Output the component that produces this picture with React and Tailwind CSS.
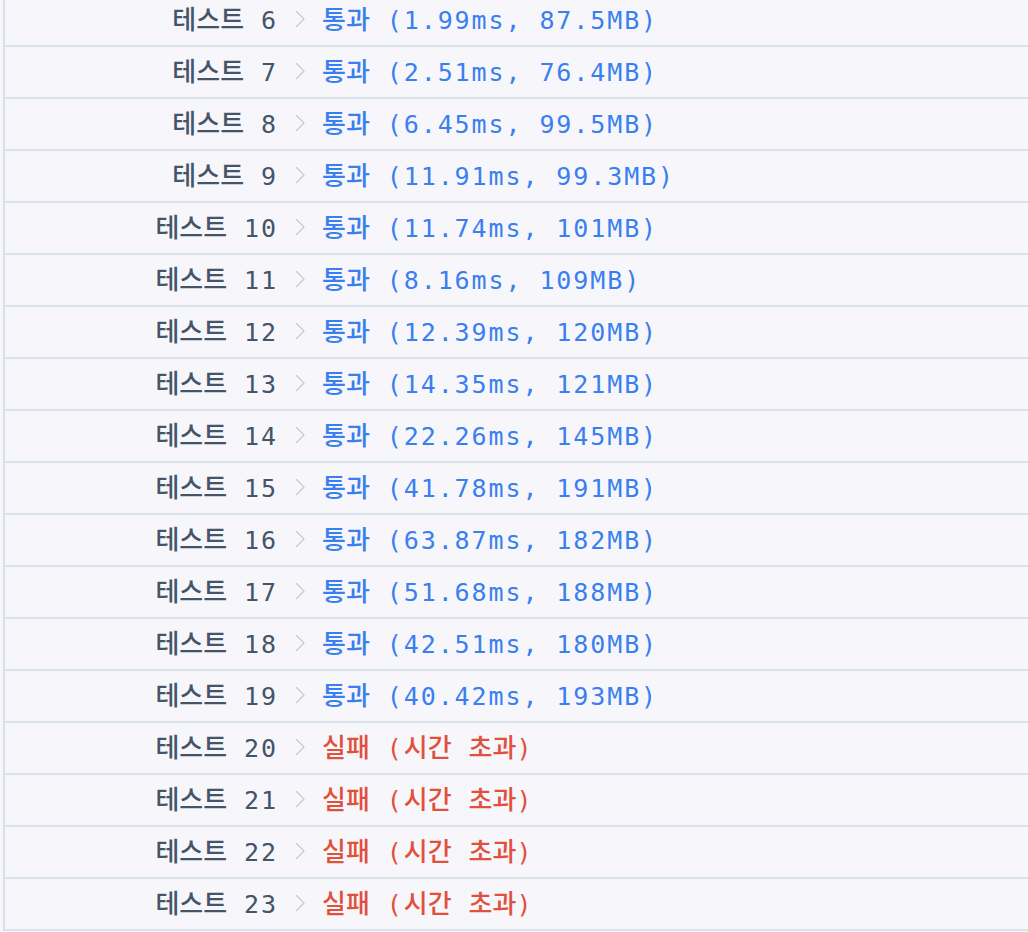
import React from 'react';

const results = [
  { n: 6, ok: true, time: '1.99ms', mem: '87.5MB' },
  { n: 7, ok: true, time: '2.51ms', mem: '76.4MB' },
  { n: 8, ok: true, time: '6.45ms', mem: '99.5MB' },
  { n: 9, ok: true, time: '11.91ms', mem: '99.3MB' },
  { n: 10, ok: true, time: '11.74ms', mem: '101MB' },
  { n: 11, ok: true, time: '8.16ms', mem: '109MB' },
  { n: 12, ok: true, time: '12.39ms', mem: '120MB' },
  { n: 13, ok: true, time: '14.35ms', mem: '121MB' },
  { n: 14, ok: true, time: '22.26ms', mem: '145MB' },
  { n: 15, ok: true, time: '41.78ms', mem: '191MB' },
  { n: 16, ok: true, time: '63.87ms', mem: '182MB' },
  { n: 17, ok: true, time: '51.68ms', mem: '188MB' },
  { n: 18, ok: true, time: '42.51ms', mem: '180MB' },
  { n: 19, ok: true, time: '40.42ms', mem: '193MB' },
  { n: 20, ok: false },
  { n: 21, ok: false },
  { n: 22, ok: false },
  { n: 23, ok: false },
];

// korean glyphs and mono glyphs are sized apart
const Ko = ({ children }) => (
  <span className="font-['Noto_Sans_CJK_KR',sans-serif] font-medium text-[26px]">{children}</span>
);
const Mono = ({ children }) => (
  <span className="font-['DejaVu_Sans_Mono','Liberation_Mono',monospace] text-[25px] tracking-[1.9px] whitespace-pre">
    {children}
  </span>
);

const Chevron = () => (
  <svg width="11" height="18" viewBox="0 0 11 18" fill="none" className="shrink-0">
    <path d="M1.5 1.5 L9 9 L1.5 16.5" stroke="#c6ccd4" strokeWidth="1.4" strokeLinecap="round" strokeLinejoin="round" />
  </svg>
);

const Row = ({ r }) => (
  <div className="flex items-center h-[52px] pb-[2px] border-b-2 border-[#d8e2eb]">
    <div className="w-[273px] text-right text-[#44546a] leading-none whitespace-nowrap">
      <Ko>테스트</Ko>
      <Mono> {r.n}</Mono>
    </div>
    <div className="ml-[17px] flex items-center">
      <Chevron />
    </div>
    <div className="ml-[16px] leading-none whitespace-nowrap">
      {r.ok ? (
        <span className="text-[#3a7ff0]">
          <Ko>통과</Ko>
          <Mono> ({r.time}, {r.mem})</Mono>
        </span>
      ) : (
        <span className="text-[#e1503b]">
          <Ko>실패</Ko>
          <Mono> (</Mono>
          <Ko>시간</Ko>
          <Mono> </Mono>
          <Ko>초과</Ko>
          <Mono>)</Mono>
        </span>
      )}
    </div>
  </div>
);

export default function App() {
  return (
    <div className="w-[1028px] h-[932px] overflow-hidden bg-[#f7f7fb]">
      <div className="ml-[3px] -mt-[5px] border-l-2 border-[#d8e2eb]">
        {results.map((r) => (
          <Row key={r.n} r={r} />
        ))}
      </div>
    </div>
  );
}
